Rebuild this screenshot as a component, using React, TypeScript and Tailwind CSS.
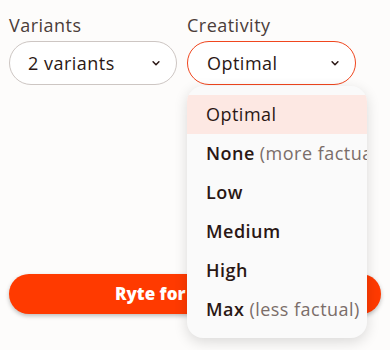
import React from 'react';

const Chevron = () => (
  <svg width="14" height="14" viewBox="0 0 24 24" fill="none" stroke="currentColor" strokeWidth="2.6" strokeLinecap="round" strokeLinejoin="round">
    <path d="M7 10l5 5 5-5" />
  </svg>
);

const options: { label: string; hint?: string }[] = [
  { label: 'Optimal' },
  { label: 'None', hint: '(more factual)' },
  { label: 'Low' },
  { label: 'Medium' },
  { label: 'High' },
  { label: 'Max', hint: '(less factual)' },
];

export default function App() {
  return (
    <div className="relative w-[390px] h-[350px] overflow-hidden bg-[#fdfcfb] text-[#2a1714] tracking-[0.03em]" style={{ fontFamily: '"Open Sans", Lato, sans-serif' }}>
      <div className="flex gap-[10px] pl-[9px] pt-[13px]">
        <div className="flex flex-col">
          <span className="text-[18px] leading-[24px] text-[#4b3d3a] mb-[4px]">Variants</span>
          <button className="w-[168px] h-[44px] rounded-full border border-[#cdc6c3] bg-white flex items-center justify-between pl-[18px] pr-[13px] text-[18px]">
            <span>2 variants</span>
            <Chevron />
          </button>
        </div>
        <div className="relative flex flex-col">
          <span className="text-[18px] leading-[24px] text-[#4b3d3a] mb-[4px]">Creativity</span>
          <button className="w-[169px] h-[44px] rounded-full border border-[#f0461e] bg-white flex items-center justify-between pl-[19px] pr-[13px] text-[18px]">
            <span>Optimal</span>
            <Chevron />
          </button>
          <div className="absolute left-0 top-[73px] w-[180px] rounded-[16px] bg-[#fafafa] shadow-[0_4px_14px_rgba(0,0,0,0.14)] py-[9px] overflow-hidden z-10">
            {options.map((o, i) => (
              <div key={o.label} className={`h-[39px] flex items-center pl-[19px] whitespace-nowrap text-[18px] ${i === 0 ? 'bg-[#fde8e3]' : ''}`}>
                <span className={i === 0 ? '' : 'font-semibold'}>{o.label}</span>
                {o.hint && <span className="ml-[5px] text-[#7a6d69]">{o.hint}</span>}
              </div>
            ))}
          </div>
        </div>
      </div>
      <div className="px-[9px] mt-[189px]">
        <button className="w-full h-[40px] rounded-full bg-[#ff3a00] shadow-[0_2px_4px_rgba(0,0,0,0.25)] text-white font-extrabold text-[17px] tracking-normal flex items-center pl-[106px]">
          Ryte for me
        </button>
      </div>
    </div>
  );
}
